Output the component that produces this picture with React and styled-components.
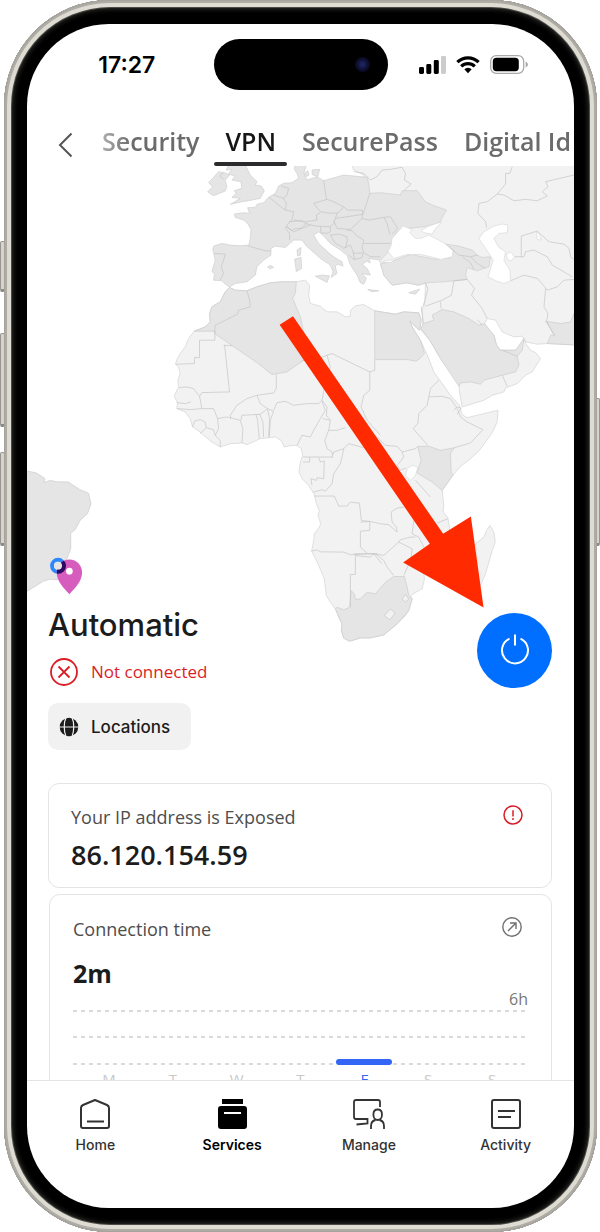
import styled, {createGlobalStyle, css} from "styled-components";
import {useState} from "react";

const GlobalStyle = createGlobalStyle`
  * {
    box-sizing: border-box;
  }

  body {
    margin: 0;
    background: white;
    font-family: "Open Sans", "Noto Sans", sans-serif;
    color: #1c1c1c;
  }

  button {
    border: none;
    background: none;
    padding: 0;
    font: inherit;
    color: inherit;
    cursor: pointer;
  }

  svg {
    display: block;
  }
`;

const Page = styled.div`
  position: relative;
  height: 100vh;
  min-height: 900px;
  padding: 0 3px 0 4px;
`;

const SideKey = styled.span`
  position: absolute;
  top: ${(props) => props.$top}px;
  ${(props) => props.$side}: 0;
  width: 5px;
  height: ${(props) => props.$length}px;
  border: 1px solid #97958e;
  border-bottom: 3px solid #8b8983;
  border-radius: 2px;
  background: #d6d4cc;
`;

const Phone = styled.div`
  position: relative;
  height: 100%;
  padding: 24px 23px;
  border-radius: 106px;
  background: black;
  box-shadow: inset 0 0 0 1px #a5a39c, inset 0 0 0 3px #aeaca5,
  inset 0 0 0 7px #dedcd2, inset 0 0 0 8px #4a4a46,
  inset 0 0 5px 9px #2e2e2c;
`;

const Screen = styled.div`
  height: 100%;
  display: flex;
  flex-direction: column;
  border-radius: 82px;
  background: white;
  overflow: hidden;
`;

const StatusBar = styled.header`
  flex: none;
  display: grid;
  grid-template-columns: 1fr 174px 1fr;
  align-items: center;
  padding-top: 15px;
`;

const Clock = styled.span`
  justify-self: center;
  padding-left: 13px;
  font-family: Inter, sans-serif;
  font-size: 23px;
  line-height: 28px;
  font-weight: 600;
  color: black;
`;

const Island = styled.div`
  height: 51px;
  display: flex;
  align-items: center;
  justify-content: flex-end;
  padding-right: 18px;
  border-radius: 26px;
  background: black;
`;

const Lens = styled.span`
  width: 15px;
  height: 15px;
  border-radius: 50%;
  background: radial-gradient(circle, #1c2560 10%, #0c0c2c 55%, #07060f 100%);
`;

const Signals = styled.div`
  justify-self: center;
  display: flex;
  align-items: center;
  gap: 10px;
  padding-right: 14px;
`;

const TopNav = styled.nav`
  flex: none;
  display: flex;
  align-items: flex-end;
  height: 76px;
  padding-left: 28px;
`;

const BackButton = styled.button`
  flex: none;
  width: 20px;
  margin-right: 17px;
  padding-bottom: 8px;
`;

const Tabs = styled.div`
  flex: 1;
  min-width: 0;
  display: flex;
  gap: 6px;
  overflow: hidden;
  -webkit-mask-image: linear-gradient(90deg, rgba(0, 0, 0, 0.4), black 40px);
  mask-image: linear-gradient(90deg, rgba(0, 0, 0, 0.4), black 40px);
`;

const Tab = styled.button`
  flex: none;
  padding: 0 10px;
  font-size: 25px;
  line-height: 36px;
  font-weight: 600;
  color: #6b6b6b;
  white-space: nowrap;

  &::after {
    content: "";
    display: block;
    height: 4px;
    margin: 3px -11px 0;
    border-radius: 2px;
  }

  ${(props) => props.$active && css`
    color: #161616;

    &::after {
      background: #2b2b2e;
    }
  `}
`;

const Content = styled.main`
  flex: 1;
  min-height: 0;
  overflow: hidden;
`;

const Hero = styled.section`
  display: grid;
  margin-bottom: 33px;

  > * {
    grid-area: 1 / 1;
  }
`;

const Map = styled.svg`
  width: 100%;
  margin-bottom: 99px;
`;

const HeroBody = styled.div`
  align-self: end;
  display: flex;
  justify-content: space-between;
  padding: 0 22px 0 21px;
`;

const Title = styled.h1`
  margin: 0 0 12px;
  font-family: Inter, sans-serif;
  font-size: 31px;
  line-height: 40px;
  font-weight: 500;
`;

const Connection = styled.p`
  display: flex;
  align-items: center;
  gap: 13px;
  margin: 0 0 16px;
  font-size: 17px;
  line-height: 30px;
  color: #da1e28;
`;

const Locations = styled.button`
  display: flex;
  align-items: center;
  gap: 12px;
  height: 47px;
  padding: 1px 21px 0 11px;
  border-radius: 10px;
  background: #f1f1f1;
  font-family: Inter, sans-serif;
  font-size: 17px;
  line-height: 24px;
  font-weight: 500;
`;

const PowerButton = styled.button`
  width: 75px;
  height: 75px;
  display: flex;
  align-items: center;
  justify-content: center;
  margin-top: 8px;
  border-radius: 50%;
  background: ${(props) => (props.$on ? "#24a148" : "#006fff")};
`;

const Card = styled.section`
  margin: 0 22px 6px 21px;
  padding: 21px 22px 16px;
  border: 1px solid #e4e4e4;
  border-radius: 11px;
`;

const ChartCard = styled(Card)`
  margin: 0 22px;
  padding: 22px 23px;
`;

const CardHead = styled.div`
  display: flex;
  align-items: flex-start;
  justify-content: space-between;
  margin-bottom: ${(props) => props.$space}px;
  padding-right: 6px;
`;

const CardLabel = styled.h2`
  margin: 0;
  font-size: 18px;
  line-height: 24px;
  font-weight: 400;
  color: #4d4d4d;
`;

const CardValue = styled.p`
  margin: 0;
  font-size: ${(props) => (props.$bold ? 25 : 27)}px;
  line-height: 32px;
  font-weight: ${(props) => (props.$bold ? 700 : 600)};
`;

const ScaleLabel = styled.div`
  font-size: 16px;
  line-height: 20px;
  text-align: right;
  color: #777;
`;

const Plot = styled.div`
  position: relative;
  height: 55px;
  display: flex;
  flex-direction: column;
  justify-content: space-between;
  margin-top: 1px;
`;

const GridLine = styled.div`
  height: 2px;
  background: repeating-linear-gradient(90deg, #dadada 0 4px, transparent 4px 8px);
`;

const Days = styled.div`
  display: grid;
  grid-template-columns: repeat(7, 1fr);
  padding: 0 4px;
`;

/* bars lie over the grid lines and stand on the lowest one */
const Bars = styled(Days)`
  position: absolute;
  inset: 0;
  align-items: end;
  justify-items: center;
`;

const Bar = styled.span`
  width: 56px;
  border-radius: 3px;
  background: #3366f5;
`;

const Day = styled.span`
  padding-top: 4px;
  font-size: 15px;
  line-height: 20px;
  text-align: center;
  color: ${(props) => (props.$active ? "#3366f5" : "#c9c9c9")};
`;

const BottomNav = styled.nav`
  flex: none;
  display: grid;
  grid-template-columns: repeat(4, 1fr);
  height: 128px;
  padding-top: 17px;
  border-top: 1px solid #e4e4e4;
`;

const NavItem = styled.a`
  display: flex;
  flex-direction: column;
  align-items: center;
  gap: 5px;
  font-family: Inter, sans-serif;
  font-size: 14px;
  line-height: 20px;
  font-weight: ${(props) => (props.$active ? 600 : 500)};
  color: ${(props) => (props.$active ? "black" : "#333")};
  text-decoration: none;
`;

const SignalIcon = () => (
    <svg width="27" height="18" viewBox="0 0 27 18" aria-hidden="true">
        <rect x="0" y="11" width="5" height="7" rx="1.4"/>
        <rect x="7.3" y="8" width="5" height="10" rx="1.4"/>
        <rect x="14.8" y="4" width="5" height="14" rx="1.4"/>
        <rect x="22" y="0" width="5" height="18" rx="1.4" fill="#ccc"/>
    </svg>
);

const WifiIcon = () => (
    <svg width="24" height="18" viewBox="0 0 24 18" fill="none" stroke="black" strokeWidth="3.2" aria-hidden="true">
        <path d="M1.4 6.2a15.2 15.2 0 0 1 21.2 0"/>
        <path d="M5.2 10.3a9.8 9.8 0 0 1 13.6 0"/>
        <path d="M8.3 13.3a5.3 5.3 0 0 1 7.4 0L12 17.3z" fill="black" stroke="none"/>
    </svg>
);

const BatteryIcon = () => (
    <svg width="38" height="19" viewBox="0 0 38 19" aria-hidden="true">
        <rect x=".7" y=".7" width="33" height="17.6" rx="5.5" fill="none" stroke="#aaa" strokeWidth="1.3"/>
        <rect x="2.8" y="2.8" width="26" height="13.4" rx="3.6"/>
        <path d="M35.6 6.5q2.4 1 2.4 3t-2.4 3z" fill="#aaa"/>
    </svg>
);

const BackIcon = () => (
    <svg width="20" height="26" viewBox="0 0 20 26" fill="none" stroke="#555" strokeWidth="2" aria-hidden="true">
        <path d="M16.5 1.5L5 13l11.5 11.5"/>
    </svg>
);

const ErrorIcon = () => (
    <svg width="30" height="30" viewBox="0 0 30 30" fill="none" stroke="#da1e28" strokeWidth="1.8" aria-hidden="true">
        <circle cx="16" cy="15" r="13"/>
        <path d="M10.5 9.5l11 11M21.5 9.5l-11 11"/>
    </svg>
);

const GlobeIcon = () => (
    <svg width="20" height="20" viewBox="0 0 20 20" aria-hidden="true">
        <circle cx="10" cy="10" r="9.3" fill="#1c1c1c"/>
        <g fill="none" stroke="#f1f1f1" strokeWidth="1.2">
            <path d="M7.2 0C4.6 5.4 4.6 14.6 7.2 20M12.8 0c2.6 5.4 2.6 14.6 0 20M0 10h20"/>
        </g>
    </svg>
);

const PowerIcon = () => (
    <svg width="30" height="32" viewBox="0 0 30 32" fill="none" stroke="white" strokeWidth="2" aria-hidden="true">
        <path d="M9.5 4.600a13 13 0 1 0 11 0M15 .5v11"/>
    </svg>
);

const WarningIcon = () => (
    <svg width="20" height="20" viewBox="0 0 20 20" fill="none" stroke="#da1e28" strokeWidth="1.5" role="img" aria-label="Exposed">
        <circle cx="10" cy="10" r="9"/>
        <path d="M10 5.2v6.3M10 13v2"/>
    </svg>
);

const OpenIcon = () => (
    <svg width="20" height="20" viewBox="0 0 20 20" fill="none" stroke="#707070" strokeWidth="1.4" aria-hidden="true">
        <circle cx="10" cy="10" r="9.2"/>
        <path d="M6 14l8-8M8 6h6v6"/>
    </svg>
);

const HomeIcon = () => (
    <svg width="32" height="32" viewBox="0 0 32 32" fill="none" stroke="#333" strokeWidth="2" strokeLinejoin="round" aria-hidden="true">
        <path d="M16 2L28 7q2 1 2 3V28q0 2-2 2H4q-2 0-2-2V10q0-2 2-3z"/>
        <path d="M8 23.5h17"/>
    </svg>
);

const ServicesIcon = () => (
    <svg width="32" height="32" viewBox="0 0 32 32" aria-hidden="true">
        <path d="M6 1h21v5H6z"/>
        <rect x="2" y="8" width="29" height="23" rx="3"/>
        <path d="M8 14h17v2H8z" fill="white"/>
    </svg>
);

const ManageIcon = () => (
    <svg width="32" height="32" viewBox="0 0 32 32" fill="none" stroke="#333" strokeWidth="1.8" aria-hidden="true">
        <path d="M27 9V4q0-2-2-2H3Q1 2 1 4v15q0 2 2 2h11.5v4.5L3.5 26.5"/>
        <path d="M29 16.5c0 3.2-1.8 5.5-4.3 5.5s-4.3-2.3-4.3-5.5c0-3 1.8-5 4.300-5s4.300 2 4.300 5z"/>
        <path d="M18 31v-3q0-5 4.500-6M31 31v-3q0-5-4.500-6"/>
    </svg>
);

const ActivityIcon = () => (
    <svg width="32" height="32" viewBox="0 0 32 32" fill="none" stroke="#333" strokeWidth="2" aria-hidden="true">
        <rect x="2" y="2" width="28" height="28" rx="2"/>
        <path d="M8 13h17M8 19h13"/>
    </svg>
);

const WorldMap = () => (
    <Map viewBox="81 498 1639 1452" aria-hidden="true">
        <g fill="#f2f2f2" stroke="#d2d2d2" strokeWidth="2" strokeLinejoin="round">
            {/* Russia, Central Asia and the Middle East */}
            <path d="M1050 480L1060 510 1090 525 1100 580 1090 640 1140 790 1150 825 1175 855 1220 848 1250 855 1275 850 1273 900 1265 925 1268 970 1262 990 1288 1020 1320 1075 1375 1150 1377 1175 1385 1220 1450 1200 1475 1185 1510 1175 1515 1163 1550 1150 1575 1125 1595 1115 1605 1098 1620 1075 1606 1058 1590 1050 1575 1030 1570 1015 1560 1040 1545 1050 1500 1050 1488 1035 1480 1005 1465 990 1452 970 1460 955 1485 960 1505 995 1540 1010 1565 1008 1575 1025 1610 1032 1640 1030 1740 1035V480z"/>
            {/* Africa */}
            <path d="M688 862L675 875 660 905 635 920 628 940 630 965 615 980 582 993 565 1015 555 1040 540 1060 530 1078 526 1092 535 1100 540 1120 533 1140 535 1160 522 1188 532 1208 530 1225 555 1235 570 1255 577 1280 600 1295 610 1305 635 1325 660 1340 690 1330 725 1328 740 1333 780 1315 825 1310 842 1320 852 1340 870 1336 890 1335 903 1345 907 1365 900 1385 896 1415 905 1435 925 1455 942 1482 948 1510 957 1530 953 1545 961 1570 957 1580 942 1600 940 1620 934 1652 955 1695 972 1735 974 1755 978 1785 990 1805 1005 1825 1015 1850 1025 1870 1023 1890 1030 1913 1048 1922 1080 1912 1110 1912 1150 1903 1190 1870 1215 1845 1225 1830 1235 1795 1230 1785 1250 1773 1265 1765 1272 1735 1268 1700 1310 1660 1345 1610 1347 1580 1342 1552 1328 1535 1330 1515 1325 1470 1357 1425 1380 1398 1410 1375 1435 1352 1455 1325 1475 1297 1490 1265 1492 1230 1450 1240 1400 1252 1385 1243 1377 1215 1350 1185 1325 1150 1300 1115 1285 1075 1260 1020 1235 980 1228 962 1250 985 1258 990 1262 960 1255 938 1210 935 1185 942 1160 938 1123 932 1090 913 1065 917 1050 930 1050 948 1035 950 1010 935 980 935 960 918 930 910 925 885 928 855 915 840 888 845 845 845 810 848 770 860 740 872 705 870z"/>
            <path d="M1468 1575L1480 1595 1484 1625 1475 1650 1455 1720 1435 1765 1422 1720 1430 1680 1425 1630 1450 1610 1458 1590z"/>
        </g>
        <g fill="#e5e5e5" stroke="#cacaca" strokeWidth="2" strokeLinejoin="round">
            {/* Morocco, Algeria */}
            <path d="M688 862L675 875 660 905 635 920 628 940 630 965 615 980 582 993H643V1000L770 1087 815 1123 860 1115 910 1080 908 985 900 950 877 895 885 880 888 845 845 845 810 848 770 860 740 872 705 870z"/>
            {/* Egypt */}
            <path d="M1123 932L1160 938 1185 942 1210 935 1255 938 1262 960 1258 990 1250 985 1228 962 1235 980 1260 1020 1272 1060 1258 1075 1247 1083 1220 1078H1123z"/>
            {/* Kenya */}
            <path d="M1252 1338L1285 1338 1320 1350 1362 1342 1350 1360 1352 1415 1357 1425 1325 1470 1295 1445 1250 1418 1262 1380z"/>
            {/* South Africa */}
            <path d="M1005 1825L1010 1820 1030 1828 1048 1820 1052 1770 1062 1780 1065 1797 1080 1795 1100 1775 1125 1780 1155 1745 1180 1728 1212 1728 1220 1760 1225 1785 1235 1795 1225 1830 1190 1870 1150 1903 1110 1912 1080 1912 1048 1922 1030 1913 1023 1890 1025 1870z"/>
            {/* Arabia */}
            <path d="M1268 970L1300 960 1295 945 1325 928 1360 935 1405 955 1435 975 1452 970 1480 1005 1488 1035 1500 1050 1545 1050 1570 1015 1565 1050 1550 1068 1555 1095 1545 1115 1505 1125 1450 1140 1440 1152 1410 1145 1380 1148 1375 1158 1320 1075 1288 1020 1262 985z"/>
            {/* Pakistan */}
            <path d="M1635 963L1680 970 1710 965 1722 935H1740V1035L1640 1030 1650 1005 1663 1005z"/>
            {/* Brazil */}
            <path d="M60 1410L81 1412 110 1418 135 1435 132 1447 150 1440 170 1444 205 1445 240 1468 265 1478 273 1510 262 1540 240 1560 225 1588 212 1598 212 1645 200 1675 172 1738 150 1736 130 1742 110 1755 81 1772 60 1780z"/>
        </g>
        <g transform="translate(480 480)" fill="#e5e5e5" stroke="#cdcdcd" strokeWidth="2" strokeLinejoin="round">
            {/* Europe */}
            <path d="M405 10L402 28 410 40 415 55 395 68 370 70 355 78 345 100 325 112 310 128 290 133 285 142 262 143 268 160 250 158 222 162 225 172 250 180 262 190 272 208 270 235 266 255 240 257 210 255 185 250 160 258 158 268 165 300 155 335 163 340 160 360 185 362 195 372 208 380 225 370 260 365 273 355 285 345 290 320 310 300 332 285 332 265 345 258 375 262 400 240 425 240 438 258 450 268 480 295 510 315 518 335 512 352 530 340 525 320 530 312 548 318 545 305 520 290 505 278 475 250 460 225 475 215 490 228 510 250 540 270 560 285 568 310 580 330 590 345 600 368 610 372 618 355 605 340 630 345 620 325 605 312 620 303 630 308 625 295 645 298 660 300 675 285 690 270 695 245 710 215 740 205 790 200 835 190 858 150 820 137 795 125 770 92 725 92 720 105 660 98 628 100 625 70 620 52 550 45 490 62 470 50 440 60 430 40 440 10z"/>
            <path d="M205 15L198 30 215 28 205 42 225 48 215 60 242 65 245 85 222 92 228 100 215 112 240 115 210 133 245 125 265 122 300 115 312 92 303 78 285 75 290 65 270 45 255 15z"/>
            <path d="M160 52L175 35 192 38 208 45 195 60 200 80 195 93 160 107 142 95 158 80 145 68z"/>
            <path d="M410 270L422 262 420 285 412 288zM403 297L422 292 424 325 408 334zM465 348L485 345 507 347 500 367zM622 388L655 392 635 395zM322 320L332 316 340 322 328 326z"/>
            <path d="M432 40L442 32 446 45 437 50zM455 30L478 28 472 50 456 44z"/>
        </g>
        <g transform="translate(1110 480)" fill="#e5e5e5" stroke="#cdcdcd" strokeWidth="2" strokeLinejoin="round">
            {/* Turkey and the Caucasus */}
            <path d="M30 312L75 300 120 283 190 297 240 293 250 270 225 252 265 258 305 270 320 285 335 292 360 290 355 320 340 325 320 332 290 322 285 345 290 358 220 365 165 368 145 375 110 368 65 375 40 345 35 325z"/>
            <path d="M115 398L148 387 135 402z"/>
        </g>
        {/* seas and lakes */}
        <g transform="translate(1110 480)" fill="white" stroke="#d8d8d8" strokeWidth="2" strokeLinejoin="round">
            <path d="M53 275L62 255 65 235 85 212 98 198 125 208 118 218 135 235 150 235 175 225 205 240 232 255 248 272 245 290 210 298 190 292 150 283 110 283 70 295z"/>
            <path d="M153 210L175 198 215 185 195 205 185 222 160 218z"/>
            <path d="M370 198L395 192 412 195 410 218 385 220 370 235 385 262 405 275 400 300 418 330 420 362 400 370 375 362 352 350 362 320 368 300 345 265 325 235 340 215z"/>
            <path d="M408 283L420 275 432 290 422 302 410 298zM498 215L506 222 512 240 500 238zM33 306L50 300 75 300 60 307z"/>
        </g>
        <g transform="translate(1080 1020)" fill="white" stroke="#d8d8d8" strokeWidth="2">
            <path d="M140 385L155 375 172 380 165 405 150 420 135 405z"/>
            <path d="M72 825L90 805 104 818 88 838zM125 775L135 762 145 775 135 785z" fill="#f2f2f2" stroke="#c4c4c4"/>
        </g>
        <g fill="none" stroke="#c2c2c2" strokeWidth="2" strokeLinejoin="round">
            <path transform="translate(480 480)" d="M262 257L290 265 315 272 332 273M162 280L195 282 190 300 183 320 190 340 180 360M325 112L340 122 355 135 375 150 400 155 395 180 380 195 375 205 388 220 388 240M340 105L370 115 378 130 375 150M362 78L385 85 380 105 370 115M400 180L435 185 470 180 468 165 480 158M490 60L498 118M460 130L500 118 520 125 550 140 535 158 510 160 480 155zM435 190L465 198 510 200 520 190 525 175 530 160M385 185L425 182 438 192 420 205 405 205 395 212 378 200M550 140L560 150 605 150 608 163 560 170 525 175M520 182L530 205 570 208 590 190 605 175M480 200L482 218 500 220 510 215 510 200M510 225L535 222 560 230 560 245 555 265M510 225L525 250 548 262M558 210L575 212 590 228 610 240 605 262 610 275M610 250L640 250M640 250H690M605 165L605 175 625 180 670 172 690 170 712 205 695 222M548 265L570 255 578 275 583 300M578 280L610 278 630 290 660 290M628 100L612 150 605 165M565 285L580 298 605 293 608 278M260 392L268 420 270 440 235 450 232 462 165 495 163 515M380 200L400 215 450 195M670 172L680 190 688 222M190 38L178 48 190 58"/>
            <path transform="translate(1110 480)" d="M-50 35L-20 40 0 60 20 50 35 30 60 28 95 22 105 40 102 60 122 72 100 92M165 368L172 385 160 438M290 358L250 362 243 405 215 420 165 438M290 358L312 385 303 405 335 445 350 475M210 425L212 445M420 362L460 345 500 355 518 375 530 390 560 380 580 360 610 358M525 385L520 440 532 460 528 483 550 525M425 20L418 40 405 40V72L380 102 350 125 325 130 322 160 345 185 348 202M380 102L400 105 430 122 465 118 500 122 530 108 515 95 532 80 525 65 610 45M452 290V228L500 213 535 245 580 252 595 265 600 290 612 300M432 290L460 290 465 275 490 270 530 290 545 315 605 350M225 252L265 285 300 290 320 285M275 290L300 308 310 328M300 290L320 310 345 325M320 478L335 495M158 490L152 440M395 570L440 588"/>
            <path transform="translate(480 1020)" d="M46 72L103 70V52H118V0H164V-27M190 15L215 17M193 15L208 155 125 157 118 168 100 145 80 140 57 142M118 168L125 205M50 187L75 190 92 185M50 205L90 208 125 205 160 205 172 235 175 265 165 285 180 300V320M97 260L103 242 120 238 135 245 138 262 120 280M138 262L160 268 165 285M172 235L200 230 240 240 248 265 245 308M212 235L210 225 230 195 260 175 290 165 300 190 322 205 300 222 245 225 242 240M290 165L340 158 348 145V103M287 222L292 240 297 295M298 222L308 245 310 290M322 207L328 235 325 290M322 205L340 213 330 240 327 290M340 210L350 187 375 183 400 195 440 190 475 190 485 180M485 183L495 210 480 235 460 270 450 290 425 285 410 315M425 60L450 65 500 45 515 40 628 95M500 45L510 80 495 120 490 155 485 180M628 95V150L610 165 602 200 620 240 660 285M628 95L643 90V60M485 180L500 200 498 225 510 240 487 235M510 240L505 270 530 270 555 262M505 270L493 300 500 325 515 335 517 353M428 350H515M517 345L520 335 550 325 565 310 610 322M428 365H448V350M475 352L480 365 492 362 490 415 470 412 468 420 452 415 455 435M550 325L545 350 540 370 520 400 515 430 495 452 485 448 460 455M462 467H522L535 497 560 497 570 485 597 488 603 540 628 543 628 570 600 572V620L620 638M454 632L470 628 480 634 550 635 570 643 620 640 650 640M585 645V702H570V800M585 645L630 650 640 640 665 670"/>
            <path transform="translate(1080 1020)" d="M0 545L30 543 60 550 85 553 110 575 108 560 95 545 92 515 110 503 130 500M28 270L60 300 75 315 110 318 125 335 165 325 172 318M125 335L130 350 110 375 120 390 137 382M202 315L180 290 158 265 172 250 175 220 200 195 205 170 245 168 270 175 290 205 300 230 320 245 367 268 330 308 282 322M205 170L210 145 235 120M280 210L290 200 302 203 290 222M0 640L45 640 70 645 115 605 155 625 152 655 130 705M45 640L70 660 80 680 100 705M115 605L120 598 150 590 165 590M230 548L262 535M160 540L155 580 175 590 190 620M425 105L440 138M165 420L210 470M-20 640L0 640"/>
        </g>
        <g transform="translate(0 1350)">
            <clipPath id="pin-shape">
                <path d="M208 327c-22 0-38 17-38 39 0 29 25 50 38 65 13-15 38-36 38-65 0-22-16-39-38-39z"/>
            </clipPath>
            <circle cx="174" cy="346" r="18" fill="none" stroke="#2f88fb" strokeWidth="12"/>
            <path d="M208 327c-22 0-38 17-38 39 0 29 25 50 38 65 13-15 38-36 38-65 0-22-16-39-38-39z" fill="#d65dbd"/>
            <circle cx="174" cy="346" r="12" fill="#e5e5e5"/>
            <circle cx="174" cy="346" r="18" fill="none" stroke="#2d0966" strokeWidth="12" clipPath="url(#pin-shape)"/>
            <circle cx="208" cy="362" r="10" fill="white"/>
        </g>
        <path d="M838 974L878 948 1328 1600 1411 1548 1449 1821 1208 1686 1288 1630z" fill="#ff2a00"/>
    </Map>
);

const tabs = ["Security", "VPN", "SecurePass", "Digital Id"];

const usage = [
    {day: "M", minutes: 0},
    {day: "T", minutes: 0},
    {day: "W", minutes: 0},
    {day: "T", minutes: 0},
    {day: "F", minutes: 2},
    {day: "S", minutes: 0},
    {day: "S", minutes: 0},
];

const navItems = [
    {label: "Home", Icon: HomeIcon},
    {label: "Services", Icon: ServicesIcon},
    {label: "Manage", Icon: ManageIcon},
    {label: "Activity", Icon: ActivityIcon},
];

// 360 minutes fill the plot, anything used shows at least a thin bar
const barHeight = (minutes) => (minutes ? Math.max(6, Math.round((minutes / 360) * 55)) : 0);

const App = () => {
    const [tab, setTab] = useState("VPN");
    const [connected, setConnected] = useState(false);

    return (
        <Page>
            <GlobalStyle/>
            <SideKey $side="left" $top={241} $length={51}/>
            <SideKey $side="left" $top={333} $length={94}/>
            <SideKey $side="left" $top={452} $length={94}/>
            <SideKey $side="right" $top={398} $length={148}/>
            <Phone>
                <Screen>
                    <StatusBar>
                        <Clock>17:27</Clock>
                        <Island><Lens/></Island>
                        <Signals>
                            <SignalIcon/>
                            <WifiIcon/>
                            <BatteryIcon/>
                        </Signals>
                    </StatusBar>
                    <TopNav>
                        <BackButton aria-label="Back"><BackIcon/></BackButton>
                        <Tabs>
                            {tabs.map((name) => (
                                <Tab key={name} $active={name === tab} onClick={() => setTab(name)}>{name}</Tab>
                            ))}
                        </Tabs>
                    </TopNav>
                    <Content>
                        <Hero>
                            <WorldMap/>
                            <HeroBody>
                                <div>
                                    <Title>Automatic</Title>
                                    <Connection><ErrorIcon/>{connected ? "Connected" : "Not connected"}</Connection>
                                    <Locations><GlobeIcon/>Locations</Locations>
                                </div>
                                <PowerButton
                                    aria-label="Toggle VPN"
                                    $on={connected}
                                    onClick={() => setConnected(!connected)}
                                >
                                    <PowerIcon/>
                                </PowerButton>
                            </HeroBody>
                        </Hero>
                        <Card>
                            <CardHead $space={10}>
                                <CardLabel>Your IP address is Exposed</CardLabel>
                                <WarningIcon/>
                            </CardHead>
                            <CardValue>86.120.154.59</CardValue>
                        </Card>
                        <ChartCard>
                            <CardHead $space={16}>
                                <CardLabel>Connection time</CardLabel>
                                <button aria-label="Open connection time"><OpenIcon/></button>
                            </CardHead>
                            <CardValue $bold>2m</CardValue>
                            <ScaleLabel>6h</ScaleLabel>
                            <Plot>
                                <GridLine/>
                                <GridLine/>
                                <GridLine/>
                                <Bars>
                                    {usage.map(({minutes}, i) => (
                                        <Bar key={i} style={{height: barHeight(minutes)}}/>
                                    ))}
                                </Bars>
                            </Plot>
                            <Days>
                                {usage.map(({day, minutes}, i) => (
                                    <Day key={i} $active={minutes > 0}>{day}</Day>
                                ))}
                            </Days>
                        </ChartCard>
                    </Content>
                    <BottomNav>
                        {navItems.map(({label, Icon}) => (
                            <NavItem key={label} href={`#${label.toLowerCase()}`} $active={label === "Services"}>
                                <Icon/>
                                {label}
                            </NavItem>
                        ))}
                    </BottomNav>
                </Screen>
            </Phone>
        </Page>
    );
};

export default App;
